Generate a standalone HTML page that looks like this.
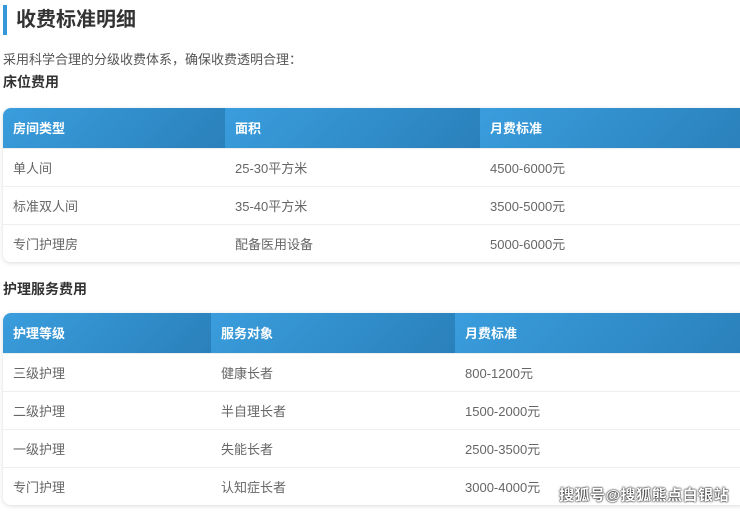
<!DOCTYPE html>
<html><head><meta charset="utf-8"><style>
*{margin:0;padding:0;box-sizing:border-box}
body{width:740px;height:511px;overflow:hidden;background:#fff;font-family:"Liberation Sans","Noto Sans CJK SC",sans-serif;position:relative;color:#555}
.bar{position:absolute;left:3px;top:5px;width:4px;height:30px;background:#3498db}
h2{position:absolute;left:16px;top:7px;font-size:20px;line-height:26px;color:#333;font-weight:bold}
.p{position:absolute;left:3px;top:51px;font-size:13px;line-height:18px;color:#555}
h3{position:absolute;left:3px;font-size:14px;line-height:18px;color:#333;font-weight:bold}
table{position:absolute;left:3px;width:745px;border-collapse:collapse;border-radius:8px;overflow:hidden;box-shadow:0 1px 5px rgba(0,0,0,.15);font-size:13px}
th{height:40px;text-align:left;padding-left:10px;color:#fff;font-weight:bold;background:linear-gradient(135deg,#3a9ddd,#2a80ba)}
td{height:38px;padding-left:10px;color:#666;border-top:1px solid #eee;background:#fff}
.wm{position:absolute;left:559px;top:484px;font-size:15px;color:#fff;font-weight:bold;text-shadow:0 0 2px #000,0 0 1px #000;letter-spacing:.5px}
</style></head><body>
<div class="bar"></div>
<h2>收费标准明细</h2>
<div class="p">采用科学合理的分级收费体系，确保收费透明合理：</div>
<h3 style="top:73px">床位费用</h3>
<table style="top:108px">
<tr><th style="width:222px">房间类型</th><th style="width:255px">面积</th><th>月费标准</th></tr>
<tr><td>单人间</td><td>25-30平方米</td><td>4500-6000元</td></tr>
<tr><td>标准双人间</td><td>35-40平方米</td><td>3500-5000元</td></tr>
<tr><td>专门护理房</td><td>配备医用设备</td><td>5000-6000元</td></tr>
</table>
<h3 style="top:280px">护理服务费用</h3>
<table style="top:313px">
<tr><th style="width:208px">护理等级</th><th style="width:244px">服务对象</th><th>月费标准</th></tr>
<tr><td>三级护理</td><td>健康长者</td><td>800-1200元</td></tr>
<tr><td>二级护理</td><td>半自理长者</td><td>1500-2000元</td></tr>
<tr><td>一级护理</td><td>失能长者</td><td>2500-3500元</td></tr>
<tr><td>专门护理</td><td>认知症长者</td><td>3000-4000元</td></tr>
</table>
<div class="wm">搜狐号@搜狐熊点白银站</div>
</body></html>
